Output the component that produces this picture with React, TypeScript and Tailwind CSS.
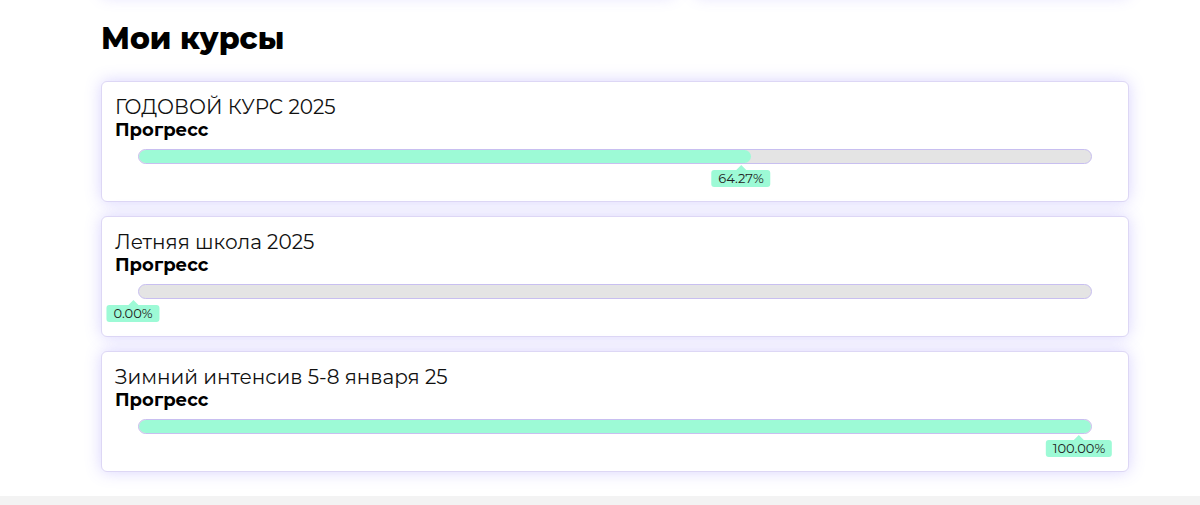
import React from "react";

const courses = [
  { name: "ГОДОВОЙ КУРС 2025", progress: 64.27 },
  { name: "Летняя школа 2025", progress: 0 },
  { name: "Зимний интенсив 5-8 января 25", progress: 100 },
];

const font = { fontFamily: "'Montserrat', 'DejaVu Sans', 'Noto Sans', sans-serif" };

function CourseCard({ name, progress }: { name: string; progress: number }) {
  const p = progress / 100;
  return (
    <div className="bg-white rounded-[6px] border border-[#ddd7f5] shadow-[0_0_16px_rgba(110,90,250,0.26)] px-[13px] pt-[13px] pb-[15px]">
      <div className="text-[20px] leading-[24px] text-[#111]">{name}</div>
      <div className="text-[18px] leading-[22px] font-bold text-black">Прогресс</div>
      <div className="relative mx-[23px] mt-[8px]">
        <div className="h-[15px] rounded-full border border-[#c8bff0] bg-[#e4e4e4] overflow-hidden">
          <div
            className="h-full rounded-full bg-[#9dfad6]"
            style={{ width: `${progress}%` }}
          />
        </div>
        <div className="h-[22px]">
          <div
            className="absolute top-[16px] -translate-x-1/2 flex flex-col items-center"
            style={{ left: `calc(${p * 946}px - 5px)` }}
          >
            <div className="w-0 h-0 border-l-[5px] border-r-[5px] border-b-[5px] border-l-transparent border-r-transparent border-b-[#9dfad6]" />
            <div className="bg-[#9dfad6] rounded-[3px] px-[7px] h-[17px] flex items-center text-[13px] text-[#222] whitespace-nowrap">
              {progress.toFixed(2)}%
            </div>
          </div>
        </div>
      </div>
    </div>
  );
}

export default function App() {
  return (
    <div className="bg-white min-h-[505px] flex flex-col overflow-hidden" style={font}>
      <div className="ml-[101px] w-[1028px] flex-1 pb-[24px]">
        <div className="grid grid-cols-[574px_1fr] gap-5 mt-[-100px] h-[96px]">
          <div className="bg-white rounded-[6px] shadow-[0_0_16px_rgba(110,90,250,0.22)]" />
          <div className="bg-white rounded-[6px] shadow-[0_0_16px_rgba(110,90,250,0.22)]" />
        </div>
        <h2 className="mt-[25px] mb-[24px] text-[30px] leading-[36px] font-extrabold text-black">
          Мои курсы
        </h2>
        <div className="flex flex-col gap-[14px]">
          {courses.map((c) => (
            <CourseCard key={c.name} name={c.name} progress={c.progress} />
          ))}
        </div>
      </div>
      <div className="h-[10px] bg-[#f3f3f3]" />
    </div>
  );
}
